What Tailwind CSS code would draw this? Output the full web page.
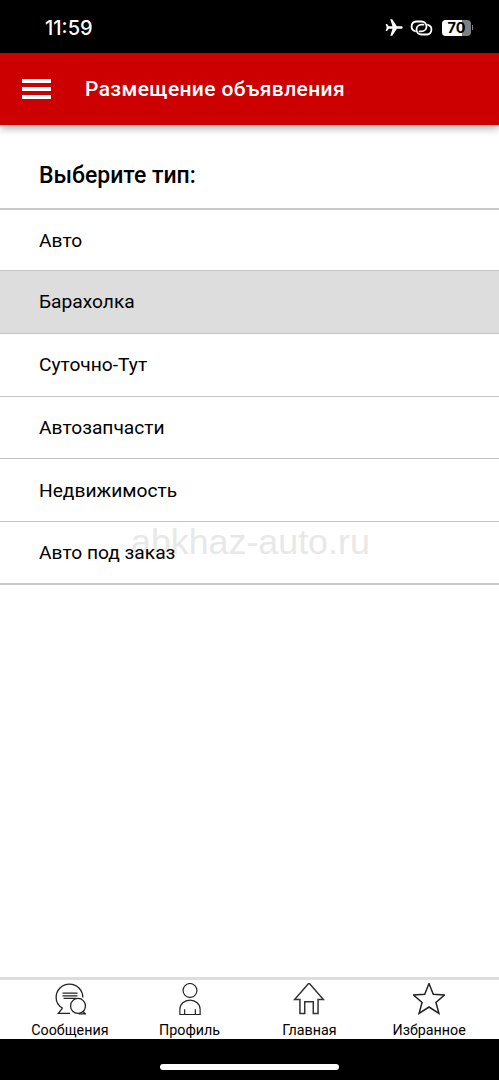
<!DOCTYPE html>
<html lang="ru">
<head>
<meta charset="utf-8">
<script src="https://cdn.jsdelivr.net/npm/@tailwindcss/browser@4"></script>
</head>
<body class="bg-white font-['Roboto',sans-serif]">
<div class="relative w-[499px] h-[1080px] overflow-hidden flex flex-col bg-white">
  <div class="h-[53px] bg-black shrink-0 flex items-center pl-[45px] pr-[26px] justify-between">
    <span class="text-white text-[20px] font-['Inter',sans-serif] font-medium pt-[3px]">11:59</span>
    <div class="flex items-center pt-[2px]">
      <svg width="20" height="19" viewBox="0 0 24 24" fill="white"><path d="M23 12c0-1-1-1.600-2-1.600h-5.400L9.800 1.500H7.300l2.800 8.900H5.400L3.300 7.700H1.500L2.800 12 1.500 16.300h1.800l2.100-2.700h4.700L7.300 22.500h2.500l5.800-8.900H21c1 0 2-.6 2-1.600z"/></svg>
      <svg class="ml-[6px]" width="23" height="16" viewBox="0 0 23 16" fill="none" stroke="white" stroke-width="1.800" stroke-linecap="round"><path d="M5 11.200A5 5 0 0 1 6 1.500h5.500a5 5 0 0 1 5 5c0 2.800-2.200 4.800-5 4.800H9.500"/><path d="M18 4.800a5 5 0 0 1-1 9.700h-5.500a5 5 0 0 1-5-5c0-2.800 2.200-4.800 5-4.800h2"/></svg>
      <div class="ml-[9px] flex items-center gap-[1px]">
        <div class="relative w-[29px] h-[16px] rounded-[4px] overflow-hidden bg-[#808080]">
          <div class="absolute left-0 top-0 bottom-0 w-[20px] bg-white"></div>
          <div class="absolute inset-0 flex items-center justify-center text-black text-[14.500px] leading-[16px] font-bold font-['Inter',sans-serif]">70</div>
        </div>
        <div class="w-[1px] h-[5px] bg-[#808080]"></div>
      </div>
    </div>
  </div>
  <header class="h-[72px] bg-[#cc0000] shrink-0 flex items-center shadow-[0_3px_8px_rgba(0,0,0,0.35)] relative z-10">
    <div class="ml-[22px] w-[29px] flex flex-col gap-[4px]">
      <div class="h-[4px] bg-white"></div>
      <div class="h-[4px] bg-white"></div>
      <div class="h-[4px] bg-white"></div>
    </div>
    <h1 class="ml-[34px] text-white text-[21px] font-medium tracking-[0.38px] pt-[2px]">Размещение объявления</h1>
  </header>
  <div class="h-[84px] shrink-0 flex items-center pl-[39px] pt-[18px]">
    <h2 class="text-[23px] font-medium text-black">Выберите тип:</h2>
  </div>
  <div class="absolute left-[131px] top-[520px] text-[35.800px] leading-[44px] text-[#e8e8e8] font-['Liberation_Sans',sans-serif]">abkhaz-auto.ru</div>
  <ul class="relative shrink-0 border-t-[2px] border-[#c8c8c8] text-[19.200px] text-black -mt-[1px]">
    <li class="h-[61px] flex items-center pl-[39px] pt-[2px] border-b border-[#c4c4c4]">Авто</li>
    <li class="h-[63px] flex items-center pl-[39px] bg-[#dddddd] border-b border-[#c4c4c4]">Барахолка</li>
    <li class="h-[63px] flex items-center pl-[39px] border-b border-[#c4c4c4]">Суточно-Тут</li>
    <li class="h-[62px] flex items-center pl-[39px] pt-[2px] border-b border-[#c4c4c4]">Автозапчасти</li>
    <li class="h-[63px] flex items-center pl-[39px] pt-[2px] border-b border-[#c4c4c4]">Недвижимость</li>
    <li class="h-[63px] flex items-center pl-[39px] pt-[2px] border-b-[2px] border-[#c8c8c8]">Авто под заказ</li>
  </ul>
  <div class="flex-1"></div>
  <nav class="shrink-0 h-[62px] px-[10px] border-t-[3px] border-[#dddddd] grid grid-cols-4 text-[14.300px] leading-[16px] text-black text-center">
    <div class="flex flex-col items-center pt-[3px]">
      <svg width="32" height="32" viewBox="1 2.500 30 30" fill="none" stroke="#222" stroke-width="1.200">
        <path d="M9 26c-3.500-2-6-5.500-6-10C3 9 8.500 3.500 15.500 3.500S28 9 28 16"/>
        <path d="M9 26 5 31h11"/>
        <circle cx="23.500" cy="24" r="7"/>
        <path d="M28 29l2.500 2.500H24"/>
        <path d="M9 12h14M9 14.500h14M10 17h12"/>
      </svg>
      <span class="mt-[7px]">Сообщения</span>
    </div>
    <div class="flex flex-col items-center pt-[3px]">
      <svg width="32" height="32" viewBox="1 2.500 30 30" fill="none" stroke="#222" stroke-width="1.100">
        <circle cx="16" cy="9.500" r="6.500"/>
        <path d="M6.500 32v-5a9.500 8.500 0 0 1 19 0v5z"/>
        <path d="M11 32v-5M21 32v-5"/>
      </svg>
      <span class="mt-[7px]">Профиль</span>
    </div>
    <div class="flex flex-col items-center pt-[3px]">
      <svg width="32" height="32" viewBox="1 2.500 30 30" fill="none" stroke="#333" stroke-width="1.400">
        <path d="M16 2.500 2.500 18h5v13h4.500V20h8v11h4.500V18h5z"/>
      </svg>
      <span class="mt-[7px]">Главная</span>
    </div>
    <div class="flex flex-col items-center pt-[3px]">
      <svg width="32" height="32" viewBox="1 2.500 30 30" fill="none" stroke="#222" stroke-width="1.400">
        <path d="M16 3l4 10 10.500.8-8 7 2.800 10.200-9.300-6-9.300 6 2.800-10.200-8-7L12 13z"/>
      </svg>
      <span class="mt-[7px]">Избранное</span>
    </div>
  </nav>
  <div class="h-[41px] shrink-0 bg-black flex justify-center pt-[25px]">
    <div class="w-[179px] h-[6px] rounded-full bg-white"></div>
  </div>
</div>
</body>
</html>
